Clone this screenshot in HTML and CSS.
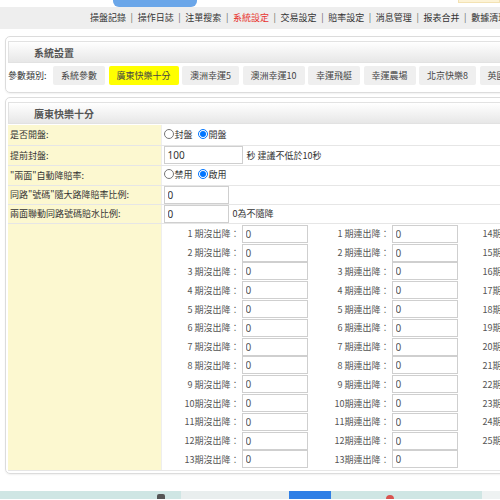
FILE: index.html
```html
<!DOCTYPE html>
<html lang="zh-Hant">
<head>
  <meta charset="UTF-8" />
  <title>系統設定</title>
  <link rel="stylesheet" href="styles.css">
</head>
<body>
  <div class="topbar">
    <div class="tab"></div>
    <div class="notice"></div>
  </div>

  <div class="nav">
    <a>操盤記錄</a><span class="sep">|</span><a>操作日誌</a><span class="sep">|</span><a>注單搜索</a><span class="sep">|</span><a class="current">系統設定</a><span class="sep">|</span><a>交易設定</a><span class="sep">|</span><a>賠率設定</a><span class="sep">|</span><a>消息管理</a><span class="sep">|</span><a>报表合并</a><span class="sep">|</span><a>數據清理</a>
  </div>

  <div class="page">
    <div class="panel">
      <div class="panel-head">系統設置</div>
      <div class="cats">
        <span class="cats-label">參數類別:</span>
        <a class="cat">系統參數</a>
        <a class="cat active">廣東快樂十分</a>
        <a class="cat">澳洲幸運5</a>
        <a class="cat">澳洲幸運10</a>
        <a class="cat">幸運飛艇</a>
        <a class="cat">幸運農場</a>
        <a class="cat">北京快樂8</a>
        <a class="cat">英國快樂8</a>
      </div>
    </div>

    <div class="panel panel-form">
      <div class="panel-head">廣東快樂十分</div>
      <table class="form">
        <tr class="r20">
          <td class="lbl">是否開盤:</td>
          <td class="val">
            <label class="opt"><input type="radio" name="open">封盤</label>
            <label class="opt"><input type="radio" name="open" checked>開盤</label>
          </td>
        </tr>
        <tr class="r20">
          <td class="lbl">提前封盤:</td>
          <td class="val"><input class="txt wide" type="text" value="100"><span class="hint">秒 建議不低於10秒</span></td>
        </tr>
        <tr class="r20">
          <td class="lbl">"兩面"自動降賠率:</td>
          <td class="val">
            <label class="opt"><input type="radio" name="auto">禁用</label>
            <label class="opt"><input type="radio" name="auto" checked>啟用</label>
          </td>
        </tr>
        <tr class="r19">
          <td class="lbl">同路"號碼"隨大路降賠率比例:</td>
          <td class="val"><input class="txt" type="text" value="0"></td>
        </tr>
        <tr class="r19">
          <td class="lbl">兩面聯動同路號碼賠水比例:</td>
          <td class="val"><input class="txt" type="text" value="0"><span class="hint">0為不隨降</span></td>
        </tr>
        <tr>
          <td class="lbl"></td>
          <td class="val grid-cell">
            <div class="drow"><span class="dl">1 期沒出降：</span><input class="dtxt" value="0"><span class="dl2">1 期連出降：</span><input class="dtxt" value="0"><span class="dl3">14期沒出降：</span></div>
            <div class="drow"><span class="dl">2 期沒出降：</span><input class="dtxt" value="0"><span class="dl2">2 期連出降：</span><input class="dtxt" value="0"><span class="dl3">15期沒出降：</span></div>
            <div class="drow"><span class="dl">3 期沒出降：</span><input class="dtxt" value="0"><span class="dl2">3 期連出降：</span><input class="dtxt" value="0"><span class="dl3">16期沒出降：</span></div>
            <div class="drow"><span class="dl">4 期沒出降：</span><input class="dtxt" value="0"><span class="dl2">4 期連出降：</span><input class="dtxt" value="0"><span class="dl3">17期沒出降：</span></div>
            <div class="drow"><span class="dl">5 期沒出降：</span><input class="dtxt" value="0"><span class="dl2">5 期連出降：</span><input class="dtxt" value="0"><span class="dl3">18期沒出降：</span></div>
            <div class="drow"><span class="dl">6 期沒出降：</span><input class="dtxt" value="0"><span class="dl2">6 期連出降：</span><input class="dtxt" value="0"><span class="dl3">19期沒出降：</span></div>
            <div class="drow"><span class="dl">7 期沒出降：</span><input class="dtxt" value="0"><span class="dl2">7 期連出降：</span><input class="dtxt" value="0"><span class="dl3">20期沒出降：</span></div>
            <div class="drow"><span class="dl">8 期沒出降：</span><input class="dtxt" value="0"><span class="dl2">8 期連出降：</span><input class="dtxt" value="0"><span class="dl3">21期沒出降：</span></div>
            <div class="drow"><span class="dl">9 期沒出降：</span><input class="dtxt" value="0"><span class="dl2">9 期連出降：</span><input class="dtxt" value="0"><span class="dl3">22期沒出降：</span></div>
            <div class="drow"><span class="dl">10期沒出降：</span><input class="dtxt" value="0"><span class="dl2">10期連出降：</span><input class="dtxt" value="0"><span class="dl3">23期沒出降：</span></div>
            <div class="drow"><span class="dl">11期沒出降：</span><input class="dtxt" value="0"><span class="dl2">11期連出降：</span><input class="dtxt" value="0"><span class="dl3">24期沒出降：</span></div>
            <div class="drow"><span class="dl">12期沒出降：</span><input class="dtxt" value="0"><span class="dl2">12期連出降：</span><input class="dtxt" value="0"><span class="dl3">25期沒出降：</span></div>
            <div class="drow"><span class="dl">13期沒出降：</span><input class="dtxt" value="0"><span class="dl2">13期連出降：</span><input class="dtxt" value="0"></div>
          </td>
        </tr>
      </table>
    </div>
  </div>

  <div class="taskbar">
    <div class="tb-a"><span class="tb-icon"></span></div>
    <div class="tb-b"></div>
    <div class="tb-c"></div>
    <div class="tb-d"><span class="tb-red"></span></div>
    <div class="tb-e"></div>
  </div>
</body>
</html>
```

FILE: styles.css
```css
* {
  box-sizing: border-box;
}

html, body {
  height: 500px;
  overflow: hidden;
}

body {
  margin: 0;
  background: #fff;
  color: #333;
  font-family: "Noto Sans CJK TC", "Noto Sans", sans-serif;
  font-size: 9px;
  width: 640px;
}

/* top strip */
.topbar {
  height: 7px;
  display: flex;
  justify-content: space-between;
}

.tab {
  margin-left: 113px;
  width: 84px;
  height: 7px;
  background: #6aa6e9;
  border-radius: 0 0 6px 6px;
}

.notice {
  margin-right: 140px;
  width: 42px;
  height: 3px;
  background: #fdf3d6;
  border: 1px solid #f3e2b3;
  border-top: none;
}

.nav {
  height: 22px;
  line-height: 22px;
  background: #eeeeee;
  padding-left: 90px;
  white-space: nowrap;
  color: #333;
}

.nav .sep {
  margin: 0 4.6px;
  color: #666;
}

.nav .current {
  color: #e8342f;
}

.page {
  padding: 7px 0 0 5px;
}

/* panels */
.panel {
  border: 1px solid #dcdcdc;
  border-radius: 5px;
  padding: 4px 3px 7px 2px;
  box-shadow: 0 1px 2px rgba(0,0,0,0.06);
}

.panel-form {
  margin-top: 4px;
  padding-bottom: 2px;
}

.panel-head {
  height: 22px;
  line-height: 21px;
  padding-left: 25px;
  font-size: 10px;
  font-weight: bold;
  color: #555;
  background: linear-gradient(#ffffff, #e7e7e7);
  border: 1px solid #e2e2e2;
}

.cats {
  display: flex;
  align-items: center;
  gap: 3.5px;
  margin-top: 3px;
  height: 19px;
  white-space: nowrap;
}

.cats-label {
  margin-right: 3px;
}

.cat {
  height: 19px;
  line-height: 19px;
  padding: 0 8px;
  background: #efefef;
  border-radius: 2px;
  color: #444;
}

.cat.active {
  background: #ffff00;
}

/* form table */
.form {
  border-collapse: collapse;
  width: 100%;
  margin-top: 1px;
}

.form td {
  border-bottom: 1px solid #e6e6e6;
  padding: 0;
}

.form .r20 td { height: 20px; }
.form .r19 td { height: 19px; }

.lbl {
  width: 153px;
  background: #fcf8d0;
  padding-left: 2px !important;
  color: #333;
  vertical-align: middle;
}

.val {
  padding-left: 2px !important;
  border-left: 1px solid #eee;
  white-space: nowrap;
  vertical-align: middle;
}

.opt {
  display: inline-flex;
  align-items: center;
  margin-right: 3px;
}

.opt input {
  width: 10px;
  height: 10px;
  margin: 0 1px 0 0;
}

.txt {
  width: 65px;
  height: 18px;
  border: 1px solid #cfcfcf;
  padding: 0 3px;
  font-family: "Noto Sans", sans-serif;
  font-size: 10px;
  color: #333;
  vertical-align: middle;
}

.txt.wide {
  width: 79px;
}

.hint {
  margin-left: 4px;
  vertical-align: middle;
}

/* per-issue grid */
.grid-cell {
  padding-top: 1px !important;
  padding-bottom: 1px !important;
}

.drow {
  display: flex;
  align-items: center;
  height: 18.8px;
}

.dl, .dl2 {
  text-align: right;
  color: #555;
}

.dl { width: 76px; }
.dl2 { width: 82px; }

.dl3 {
  margin-left: 25px;
  color: #555;
}

.dtxt {
  width: 66px;
  height: 18px;
  margin-left: 2px;
  border: 1px solid #cfcfcf;
  padding: 0 3px;
  font-family: "Noto Sans", sans-serif;
  font-size: 10px;
  color: #555;
}

/* taskbar strip at the bottom */
.taskbar {
  display: flex;
  height: 8px;
  margin-top: 17px;
}

.tb-a {
  width: 181px;
  background: #cfe6e4;
  position: relative;
}

.tb-icon {
  position: absolute;
  left: 157px;
  top: 3px;
  width: 8px;
  height: 5px;
  background: #555;
  border-radius: 2px 2px 0 0;
}

.tb-b {
  width: 108px;
  background: #e9eeee;
}

.tb-c {
  width: 42px;
  background: #2f7fe6;
}

.tb-d {
  width: 151px;
  background: #cfe6e4;
  position: relative;
}

.tb-red {
  position: absolute;
  left: 55px;
  top: 4px;
  width: 8px;
  height: 4px;
  background: #d9534f;
  border-radius: 4px 4px 0 0;
}

.tb-e {
  flex: 1;
  background: #eef2f2;
}
```
